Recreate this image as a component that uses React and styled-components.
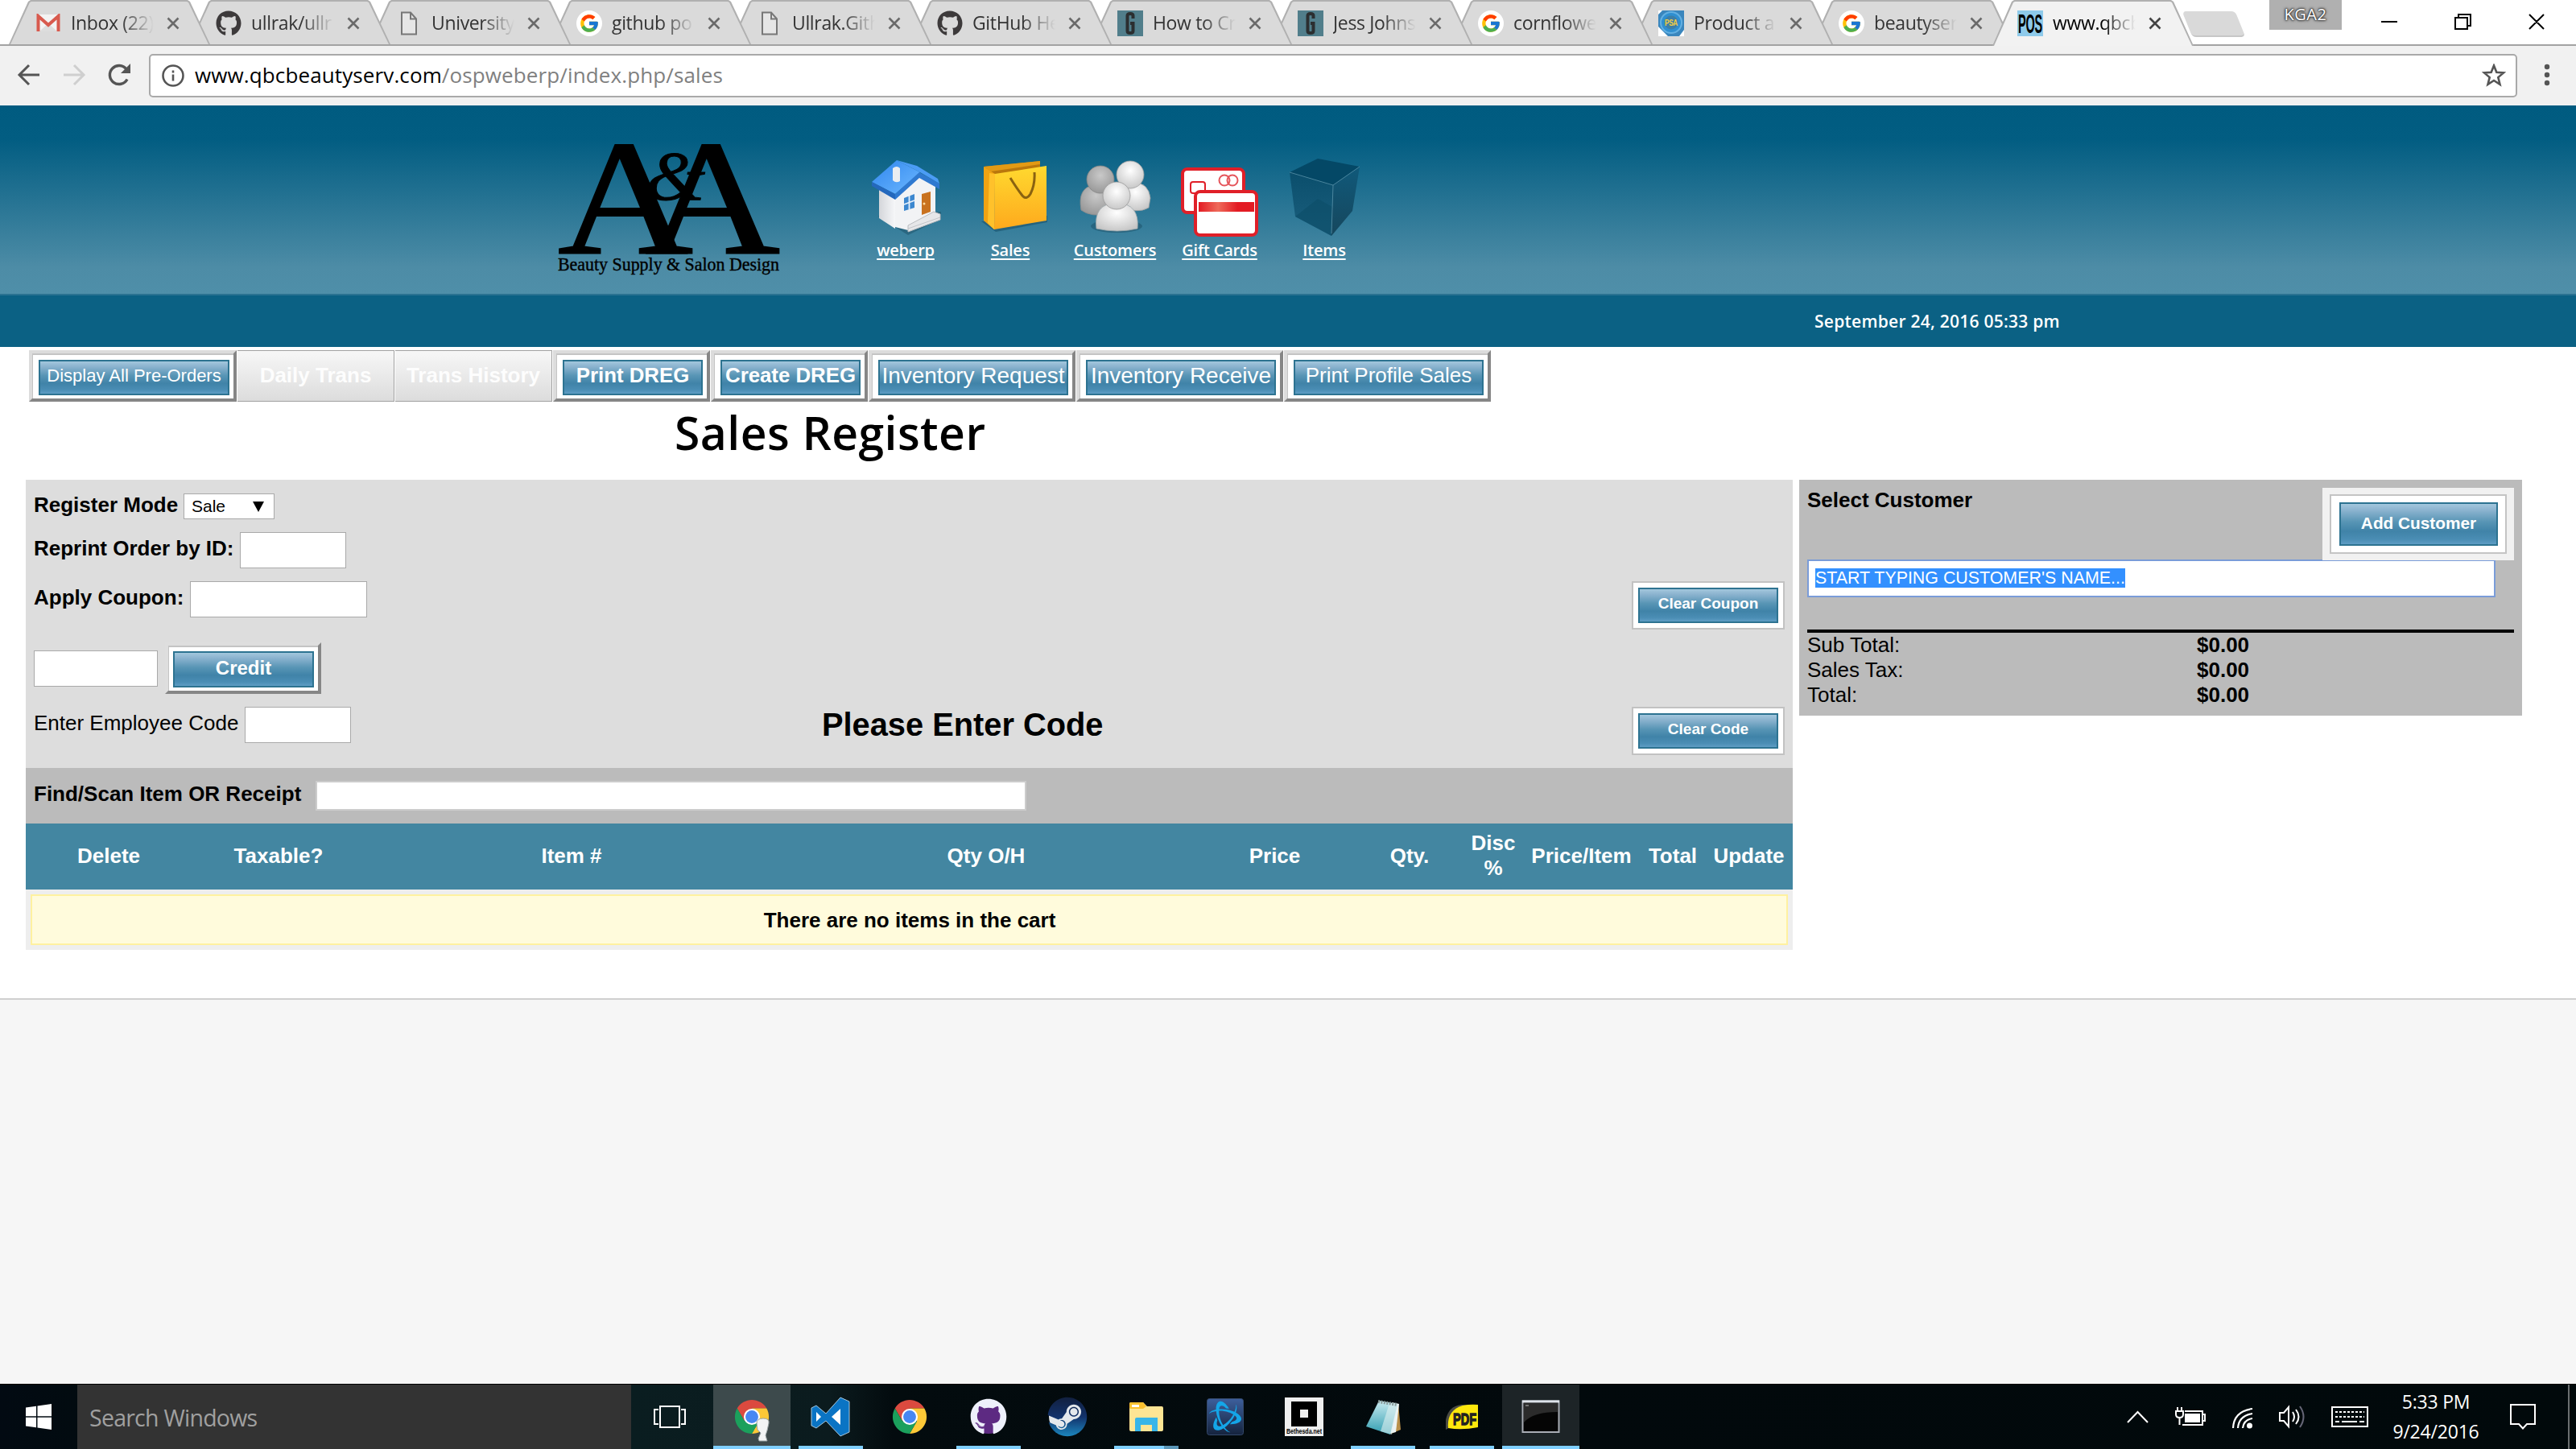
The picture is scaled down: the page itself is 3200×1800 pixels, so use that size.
import React from "react";
import styled, { createGlobalStyle, css } from "styled-components";
import { FaGithub, FaSteam } from "react-icons/fa";
import { FcGoogle } from "react-icons/fc";
import { SiBattledotnet } from "react-icons/si";

const ui = `"Open Sans", "Noto Sans", sans-serif`;
const arial = `"Liberation Sans", Arial, sans-serif`;

const GlobalStyle = createGlobalStyle`
  * { box-sizing: border-box; }
  body { margin: 0; background: #f6f6f6; font-family: ${arial}; font-size: 26px; color: #000; }
  svg { display: block; flex: none; }
  button, input { font-family: inherit; margin: 0; }
`;

const Screen = styled.div`
  width: 3200px;
  height: 1800px;
  display: flex;
  flex-direction: column;
  overflow: hidden;
`;

/* ---------- browser chrome ---------- */

const TabStrip = styled.div`
  height: 57px;
  flex: none;
  display: flex;
  padding-left: 11px;
  background: #fff;
  border-bottom: 2px solid #a3a3a3;
`;

const Tab = styled.div`
  position: relative;
  z-index: ${(p) => (p.$active ? 30 : 20 - p.$order)};
  width: 250px;
  height: ${(p) => (p.$active ? 57 : 55)}px;
  margin-right: -26px;
  flex: none;
  padding: ${(p) => (p.$active ? "0 32px 2px 31px" : "0 32px 0 33px")};
  display: flex;
  align-items: center;
  font-family: ${ui};
  font-size: 23px;
  letter-spacing: -0.35px;
  color: ${(p) => (p.$active ? "#000" : "#333")};

  &::before, &::after {
    content: "";
    position: absolute;
    inset: 0;
    z-index: -1;
    clip-path: polygon(0 100%, 24px 2px, 27px 0, 222px 0, 225px 2px, 250px 100%);
    background: #b0b0b0;
  }
  &::after {
    clip-path: polygon(2px 100%, 26px 3px, 28px 2px, 221px 2px, 223px 3px, 248px 100%);
    background: ${(p) => (p.$active ? "#f2f2f2" : "#dadada")};
  }
`;

const Favicon = styled.span`
  width: 32px;
  height: 32px;
  margin-top: 2px;
  flex: none;
  display: flex;
  align-items: center;
  justify-content: center;
  color: #3d3a3b;
`;

const TabTitle = styled.span`
  width: 103px;
  flex: none;
  margin: 0 0 0 12px;
  line-height: 32px;
  overflow: hidden;
  white-space: nowrap;
  mask-image: linear-gradient(90deg, #000 60%, transparent 100%);
`;

const TabClose = styled.span`
  margin-left: 16px;
  margin-top: 3px;
`;

const NewTab = styled.div`
  width: 66px;
  height: 32px;
  margin: 14px 0 0 18px;
  background: #d9d9d9;
  border-bottom: 2px solid #c6c6c6;
  border-radius: 5px;
  transform: skewX(22deg);
`;

const WindowControls = styled.div`
  margin-left: auto;
  height: 55px;
  display: flex;
  align-items: flex-start;
  padding-right: 39px;
`;

const UserBadge = styled.div`
  width: 90px;
  height: 37px;
  margin-right: 49px;
  background: #b0b0b0;
  font: 400 20px/35px ${ui};
  letter-spacing: 0.5px;
  color: #fff;
  text-align: center;
  text-shadow: 0 0 1px #333, 0 0 2px #333, 0 0 3px #444, 0 0 3px #555, 0 0 4px #666;
`;

const Controls = styled.svg`
  margin-top: 10px;
`;

const Toolbar = styled.div`
  height: 74px;
  flex: none;
  display: flex;
  align-items: center;
  padding: 0 28px 0 20px;
  background: #f1f1f1;
`;

const NavButtons = styled.div`
  display: flex;
  gap: 24px;
  width: 165px;
`;

const AddressBar = styled.div`
  flex: 1;
  height: 54px;
  margin-right: 29px;
  padding: 0 12px 0 14px;
  display: flex;
  align-items: center;
  background: #fff;
  border: 2px solid #a9a9a9;
  border-radius: 5px;
`;

const Url = styled.span`
  margin: -2px auto 0 13px;
  font: 400 26px/40px ${ui};
  letter-spacing: 0.12px;
  color: #808080;
`;

const Host = styled.span`
  color: #000;
`;

/* ---------- site header ---------- */

const SiteHeader = styled.header`
  height: 234px;
  flex: none;
  display: flex;
  padding-left: 690px;
  background: linear-gradient(#005b80 0%, #025d82 18%, #4d8ca6 86%, #4f8fa9 100%);
`;

const Logo = styled.svg`
  margin-top: 44px;
`;

const MainNav = styled.nav`
  display: flex;
  margin: 64px 0 0 80px;
`;

const NavItem = styled.a`
  width: 130px;
  display: flex;
  flex-direction: column;
  align-items: center;
  gap: 2px;
  font: 600 20px/28px ${ui};
  letter-spacing: -0.2px;
  color: #fff;
  text-decoration: underline;
  text-decoration-thickness: 2px;
  text-underline-offset: 3px;
  text-decoration-skip-ink: none;
`;

const DateBar = styled.div`
  height: 66px;
  flex: none;
  padding: 1px 0 0 2254px;
  border-top: 2px solid #2a7291;
  background: #0b6184;
  font: 600 21px/62px ${ui};
  letter-spacing: 0.26px;
  color: #fff;
`;

/* ---------- page ---------- */

const Page = styled.main`
  height: 811px;
  flex: none;
  background: #fff;
  border-bottom: 2px solid #cfcfcf;
`;

const ActionRow = styled.div`
  display: flex;
  gap: 1px;
  padding: 4px 0 0 36px;
`;

const glossy = css`
  background: linear-gradient(#a3c7dd 0%, #8bb3cf 16%, #5895b5 44%, #4083a8 68%, #4a8db4 88%, #5f9dc4 100%);
  border: 2px solid #2d7391;
`;

const BevelButton = styled.button`
  width: ${(p) => p.$w}px;
  height: 64px;
  padding: 8px 5px 4px 8px;
  border: 4px solid;
  border-color: #dcdcdc #868686 #868686 #dcdcdc;
  background: #fff;
  box-shadow: inset 1px 2px 0 #c4c4c4;
  color: #fff;
  display: flex;
`;

const ButtonFace = styled.span`
  ${glossy}
  flex: 1;
  height: ${(p) => p.$h}px;
  padding-bottom: ${(p) => p.$lift || 0}px;
  display: flex;
  align-items: center;
  justify-content: center;
  white-space: nowrap;
  font-size: ${(p) => p.$size}px;
  font-weight: ${(p) => (p.$bold ? 700 : 400)};
`;

const DisabledButton = styled.button`
  width: 195px;
  height: 64px;
  padding: 0 0 2px;
  border: 1px solid #a2a2a2;
  border-width: 1px 1px 1px 0;
  background: linear-gradient(#f7f7f7, #dcdcdc);
  color: #fdfdfd;
  font-size: 26px;
  font-weight: 700;
  white-space: nowrap;
`;

const Title = styled.h1`
  height: 97px;
  margin: 0;
  padding-left: 838px;
  font: 600 57px/76px ${ui};
  letter-spacing: 0.45px;
`;

const Columns = styled.div`
  display: flex;
  align-items: flex-start;
  gap: 8px;
  padding-left: 32px;
`;

const Register = styled.section`
  width: 2195px;
`;

const FormPanel = styled.div`
  height: 358px;
  padding: 17px 10px 0;
  display: flex;
  flex-direction: column;
  gap: 16px;
  background: #ddd;
`;

const FormRow = styled.div`
  height: ${(p) => p.$h}px;
  display: flex;
  align-items: flex-start;
`;

const Label = styled.label`
  width: ${(p) => p.$w}px;
  line-height: ${(p) => p.$lh || 40}px;
  font-weight: ${(p) => (p.$plain ? 400 : 700)};
  white-space: nowrap;
`;

const Field = styled.input`
  width: ${(p) => p.$w}px;
  height: 45px;
  padding: 0;
  border: 1px solid #a9a9a9;
  background: #fff;
`;

const ModeSelect = styled.div`
  width: 113px;
  height: 32px;
  padding: 0 12px 0 9px;
  display: flex;
  align-items: center;
  justify-content: space-between;
  border: 1px solid #a9a9a9;
  background: #fff;
  font-size: 21px;
`;

const CreditRow = styled(FormRow)`
  gap: 9px;
  ${Field} { margin-top: 10px; }
`;

const CreditButton = styled(BevelButton)`
  border-top-color: #dedede;
  border-left-color: #dedede;
  padding: 7px 5px 4px 6px;
`;

const Prompt = styled.strong`
  margin: 0 auto 0 585px;
  font-size: 39.8px;
  line-height: 45px;
`;

const FramedButton = styled.button`
  width: 190px;
  height: 60px;
  margin-left: auto;
  padding: 6px;
  border: 2px solid #c2c2c2;
  background: #fff;
  color: #fff;
  display: flex;
`;

const ScanRow = styled.div`
  height: 69px;
  padding: 0 10px;
  display: flex;
  align-items: center;
  background: #bbb;
  ${Label} { margin-top: -5px; }
`;

const ScanField = styled.input`
  width: 883px;
  height: 37px;
  padding: 0;
  border: 2px solid #ccc;
  background: #fff;
`;

const CartHead = styled.div`
  height: 82px;
  display: grid;
  grid-template-columns: 206px 216px 512px 518px 199px 136px 72px 147px 80px 109px;
  align-items: center;
  background: #4386a1;
  color: #fff;
  font-weight: 700;
  line-height: 31px;
  text-align: center;
  padding-bottom: 2px;
`;

const CartBody = styled.div`
  height: 75px;
  padding: 6px;
  background: #eee;
`;

const EmptyNotice = styled.div`
  height: 63px;
  border: 2px solid #fff1a0;
  background: #fffbdc;
  font-weight: 700;
  line-height: 60px;
  text-align: center;
  padding-left: 1px;
`;

const CustomerPanel = styled.aside`
  width: 898px;
  height: 293px;
  padding: 10px 10px 0;
  background: #bbb;
`;

const CustomerHead = styled.div`
  height: 89px;
  display: flex;
  justify-content: space-between;
  align-items: flex-start;
  font-weight: 700;
  line-height: 30px;
`;

const AddCustomer = styled.button`
  position: relative;
  width: 238px;
  height: 90px;
  padding: 8px 9px;
  border: 0;
  background: #f1f1f1;
  color: #fff;
  display: flex;
`;

const AddFrame = styled.span`
  flex: 1;
  height: 74px;
  padding: 8px 9px 8px 10px;
  border: 2px solid #c4c4c4;
  background: #fff;
  display: flex;
`;

const CustomerField = styled.div`
  width: 855px;
  height: 47px;
  padding: 9px 8px;
  border: 2px solid #7a9cd8;
  background: #fff;
`;

const SelectedText = styled.span`
  display: inline-block;
  background: #3390ff;
  color: #fff;
  font-size: 21.4px;
  line-height: 24px;
  vertical-align: top;
  white-space: nowrap;
`;

const Totals = styled.dl`
  margin: 40px 0 0;
  border-top: 4px solid #000;
  display: grid;
  grid-template-columns: 484px 1fr;
  line-height: 31px;
`;

const Term = styled.dt``;

const Amount = styled.dd`
  margin: 0;
  font-weight: 700;
`;

const Blank = styled.div`
  flex: 1;
  background: #f6f6f6;
`;

/* ---------- taskbar ---------- */

const Taskbar = styled.footer`
  height: 81px;
  flex: none;
  display: flex;
  border-top: 1px solid #000;
  background: linear-gradient(90deg, #020a12 0, #020b10 96px, #0a1d20 784px, #0b1b1e 1030px, #030b0e 1110px, #02090c 60%, #01090b 100%);
  color: #fff;
`;

const StartButton = styled.div`
  width: 96px;
  display: flex;
  align-items: center;
  justify-content: center;
`;

const SearchBox = styled.div`
  width: 688px;
  padding-left: 15px;
  background: #333;
  color: #a0a0a0;
  font: 400 28.5px/82px ${ui};
  letter-spacing: -0.75px;
`;

const TaskView = styled.div`
  width: 96px;
  padding-bottom: 1px;
  display: flex;
  align-items: center;
  justify-content: center;
`;

const Apps = styled.div`
  display: flex;
  gap: 2px;
  margin-left: 6px;
`;

const AppButton = styled.div`
  position: relative;
  width: 96px;
  display: flex;
  align-items: center;
  justify-content: center;
  background: ${(p) => p.$bg || "transparent"};
  &::after {
    content: "";
    position: absolute;
    bottom: 0;
    left: ${(p) => (p.$wide ? 0 : 8)}px;
    right: ${(p) => (p.$wide ? 0 : 8)}px;
    height: 4px;
    background: ${(p) => (p.$stack ? "linear-gradient(90deg,#7fcfff 62px,#5b96b8 62px)" : "#7fcfff")};
    display: ${(p) => (p.$open ? "block" : "none")};
  }
`;

const OverflowSvg = styled.svg`
  overflow: visible;
`;

const Tray = styled.div`
  margin-left: auto;
  display: flex;
  align-items: center;
`;

const Clock = styled.div`
  width: 130px;
  margin: 0 27px 0 19px;
  font: 400 23px/37px ${ui};
  letter-spacing: -0.2px;
  text-align: center;
`;

const ShowDesktop = styled.div`
  width: 10px;
  height: 80px;
  margin-left: 40px;
  border-left: 2px solid #6b6f70;
`;

/* ---------- drawings ---------- */

const PageIcon = () => (
  <svg width="22" height="30" viewBox="0 0 22 30" fill="#e6e6e6" stroke="#777" strokeWidth="2">
    <path d="M2 1.500h11l7 8v19H2z" /><path d="M13 1.500v8h7" fill="none" />
  </svg>
);
const Gmail = () => (
  <svg width="30" height="24" viewBox="0 0 30 24">
    <path d="M2 1h26v21H2z" fill="#f3f3f3" />
    <path d="M4 22L15 12l11 10z" fill="#ddd" />
    <path d="M2.500 22V3L15 14 27.500 3v19" fill="none" stroke="#d85a4e" strokeWidth="4" />
  </svg>
);
const Google = () => (
  <svg width="32" height="32" viewBox="0 0 32 32">
    <circle cx="16" cy="16" r="16" fill="#fff" />
    <FcGoogle x="3" y="3" size={26} />
  </svg>
);
const GBox = () => (
  <svg width="32" height="32" viewBox="0 0 32 32">
    <path d="M0 0h32v32H0z" fill="#517e8b" />
    <path d="M19.500 10V6.500q0-2.500-3.500-2.500t-3.500 2.500v19q0 2.500 3.500 2.500t3.500-2.500V16H16" fill="none" stroke="#2b2e30" strokeWidth="4" />
  </svg>
);
const Badge = () => (
  <svg width="32" height="32" viewBox="0 0 32 32">
    <path d="M0 0h32v32H0z" fill="#3a86bd" /><path d="M0 20l12 12H0zM0 0h5L0 5zM32 24v8h-6z" fill="#fff" />
    <circle cx="16" cy="15" r="13" fill="#2f8fd0" stroke="#63b0e2" strokeWidth="2" />
    <circle cx="16" cy="15" r="8.500" fill="#3d7ea6" />
    <text x="8" y="19" fontFamily="Liberation Sans" fontWeight="700" fontSize="11" fill="#f2cf45" textLength="16" lengthAdjust="spacingAndGlyphs">PSA</text>
  </svg>
);
const Pos = () => (
  <svg width="32" height="32" viewBox="0 0 32 32">
    <path d="M0 0h32v32H0z" fill="#8ecaea" />
    <text x="1" y="27.500" fontFamily="Liberation Sans" fontWeight="700" fontSize="33" textLength="30" lengthAdjust="spacingAndGlyphs">POS</text>
  </svg>
);
const icons = { gmail: Gmail, page: PageIcon, google: Google, gbox: GBox, badge: Badge, pos: Pos, github: () => <FaGithub size={32} /> };

const Cross = ({ color }) => (
  <svg width="16" height="16" viewBox="0 0 16 16" stroke={color} strokeWidth="2.600"><path d="M1.500 1.500l13 13M14.500 1.500l-13 13" /></svg>
);

const House = () => (
  <svg width="100" height="100" viewBox="0 0 100 100">
    <defs>
      <linearGradient id="roof" x1="0" y1="0" x2="1" y2="1"><stop offset="0" stopColor="#2f86ee" /><stop offset="1" stopColor="#6db8ff" /></linearGradient>
      <linearGradient id="wall" x1="0" y1="0" x2="1" y2="0"><stop offset="0" stopColor="#d4d6da" /><stop offset="1" stopColor="#f6f7f9" /></linearGradient>
    </defs>
    <path d="M16 74L53 97 94 77V68H20z" fill="#123c50" opacity=".35" />
    <path d="M17 38l20 10v41L17 76z" fill="url(#wall)" />
    <path d="M37 48l29-29 21 16v36L53 91 37 87z" fill="#f2f3f5" />
    <path d="M53 85l32-17 8 3v7L53 93z" fill="#e6e7e9" stroke="#b9bcc0" />
    <path d="M53 89l40-14" stroke="#c3c5c9" />
    <path d="M8 31L39 4l29 15-31 27z" fill="url(#roof)" />
    <path d="M8 31l29 15v7L8 36z" fill="#2468bd" />
    <path d="M37 46l30-27 25 14v7L67 26 37 53z" fill="#2f79d0" />
    <path d="M39 4L68 19l24 14-2-6L64 11z" fill="#4b9cf5" />
    <path d="M34 14q5-4 9 0v16q-5 3-9-1z" fill="#e9edf1" />
    <path d="M48 51l13-5v17l-13 4z" fill="#3c87cf" /><path d="M54.500 48v17M48 59l13-5" stroke="#e6f0fa" strokeWidth="1.800" />
    <path d="M70 46l11-3v25l-11 4z" fill="#c9721f" /><circle cx="73" cy="58" r="1.500" fill="#ffdca0" />
  </svg>
);
const Bag = () => (
  <svg width="100" height="100" viewBox="0 0 100 100">
    <defs><linearGradient id="bag" x1="0" y1="0" x2="0" y2="1"><stop offset="0" stopColor="#ffd92f" /><stop offset="1" stopColor="#fea91d" /></linearGradient></defs>
    <path d="M14 80l18 13 64-12v-8z" fill="#0c3c52" opacity=".4" />
    <path d="M17 12L87 5v8l-56 9z" fill="#b9770c" /><path d="M17 12L87 5v4L26 18z" fill="#e29a14" />
    <path d="M17 12l14 9-1 69-13-11z" fill="#f0a313" /><path d="M24 20l7 1-1 69-8-8z" fill="#ffc12b" />
    <path d="M31 21l64-10v68l-65 11z" fill="url(#bag)" />
    <path d="M50 26q8 13 15 22 5 6 10-2 6-12 5-27" fill="none" stroke="#8a6210" strokeWidth="3" />
  </svg>
);
const People = () => (
  <svg width="100" height="100" viewBox="0 0 100 100">
    <defs>
      <radialGradient id="pa" cx=".5" cy=".35" r=".65"><stop offset="0" stopColor="#c9c9c9" /><stop offset="1" stopColor="#989898" /></radialGradient>
      <radialGradient id="pb" cx=".5" cy=".35" r=".7"><stop offset="0" stopColor="#fff" /><stop offset="1" stopColor="#c4c4c4" /></radialGradient>
    </defs>
    <ellipse cx="52" cy="86" rx="32" ry="8" fill="#123c50" opacity=".35" />
    <path d="M8 66q-5-28 16-31 22 0 22 20l-4 16q-22 4-34-5z" fill="url(#pa)" stroke="#8c8c8c" strokeWidth=".800" /><ellipse cx="32" cy="28" rx="17" ry="17" fill="url(#pa)" stroke="#858585" strokeWidth=".800" />
    <path d="M58 60q-4-26 14-29 20 1 22 20l-2 12q-16 9-34-3z" fill="url(#pb)" stroke="#a0a0a0" strokeWidth=".800" /><ellipse cx="69" cy="22" rx="17" ry="17" fill="url(#pb)" stroke="#a0a0a0" strokeWidth=".800" />
    <path d="M27 89q-4-31 25-32 29 1 26 32-25 6-51 0z" fill="url(#pb)" stroke="#9fa9ad" strokeWidth=".800" /><ellipse cx="52" cy="48" rx="17" ry="17" fill="url(#pb)" stroke="#999" strokeWidth=".800" />
  </svg>
);
const Cards = () => (
  <svg width="100" height="100" viewBox="0 0 100 100">
    <defs><linearGradient id="strip"><stop offset="0" stopColor="#e31b23" /><stop offset=".35" stopColor="#ee6a5a" /><stop offset=".7" stopColor="#e31b23" /></linearGradient></defs>
    <rect x="4" y="15" width="76" height="54" rx="6" fill="#fff" stroke="#e01f28" strokeWidth="4" />
    <rect x="14" y="31" width="18" height="14" rx="3" fill="#fff" stroke="#e01f28" strokeWidth="2" />
    <circle cx="56" cy="29" r="6.500" fill="none" stroke="#e5555b" strokeWidth="2" /><circle cx="66" cy="29" r="6.500" fill="none" stroke="#e5555b" strokeWidth="2" />
    <rect x="20" y="43" width="76" height="54" rx="6" fill="#fff" stroke="#e01f28" strokeWidth="4" />
    <path d="M24 56h69v12H24z" fill="url(#strip)" />
  </svg>
);
const Cube = () => (
  <svg width="100" height="100" viewBox="0 0 100 100">
    <defs><linearGradient id="cl" x1="0" y1="0" x2="0" y2="1"><stop offset="0" stopColor="#0a4e6c" /><stop offset="1" stopColor="#1c607e" /></linearGradient>
      <linearGradient id="cr" x1="0" y1="0" x2="0" y2="1"><stop offset="0" stopColor="#10597a" /><stop offset="1" stopColor="#16475d" /></linearGradient></defs>
    <path d="M7 19L42 2l52 10-33 23z" fill="#044866" />
    <path d="M7 19l54 16-2 63-45-24z" fill="url(#cl)" />
    <path d="M61 35l33-23-9 55-26 31z" fill="url(#cr)" />
    <path d="M14 74l28-22 18 10-1 36z" fill="#0c4c67" opacity=".6" />
    <path d="M7 19l54 16 33-23M61 35l-2 60" fill="none" stroke="#6fa3b8" strokeWidth="1" opacity=".6" />
  </svg>
);

const Chrome = () => (
  <svg width="46" height="46" viewBox="0 0 48 48">
    <path d="M24 13h19.050A22 22 0 0 0 4.950 13L14.500 29.500z" fill="#db4a3f" />
    <path d="M33.500 29.500L24 46A22 22 0 0 0 43.050 13H24z" fill="#fdc837" />
    <path d="M14.500 29.500L4.950 13A22 22 0 0 0 24 46l9.500-16.500z" fill="#1ba05c" />
    <circle cx="24" cy="24" r="10.500" fill="#fff" /><circle cx="24" cy="24" r="8.300" fill="#4787f3" />
  </svg>
);
const ChromeProfile = () => (
  <OverflowSvg width="46" height="46" viewBox="0 0 46 46">
    <Chrome />
    <path d="M29 31q0-6 8-6t7 6l-2 9-2 6 2 7H32l-1-3 3-7-4-4z" fill="#f2f4f5" stroke="#9aa4a6" />
  </OverflowSvg>
);
const VSCode = () => (
  <svg width="50" height="50" viewBox="0 0 50 50">
    <path d="M1 14l6-3 12 10L37 1l11 5v38L37 49 19 30 7 39l-6-3z" fill="#0a74c4" stroke="#a7c7dc" />
    <path d="M7 19v12l6-6zM37 15L26 25l11 10z" fill="#fff" />
  </svg>
);
const GithubDesktop = () => (
  <svg width="46" height="46" viewBox="0 0 46 46">
    <circle cx="23" cy="23" r="21" fill="#5d2a82" /><FaGithub x="0" y="0" size={46} color="#eef0fb" />
  </svg>
);
const Steam = () => (
  <svg width="50" height="50" viewBox="0 0 50 50">
    <defs><linearGradient id="st" x1="0" y1="0" x2="0" y2="1"><stop offset="0" stopColor="#12203f" /><stop offset=".5" stopColor="#12326b" /><stop offset="1" stopColor="#1c86bd" /></linearGradient></defs>
    <circle cx="25" cy="25" r="23" fill="#e4e8ec" /><FaSteam x="0" y="0" size={50} fill="url(#st)" color="url(#st)" />
  </svg>
);
const Folder = () => (
  <svg width="46" height="38" viewBox="0 0 46 38">
    <path d="M2 3q0-2 2-2h15l5 5h18q2 0 2 2v27q0 2-2 2H4q-2 0-2-2z" fill="#fee594" /><path d="M2 8V3q0-2 2-2h15l4 5-4 3H4q-2 0-2-1z" fill="#fcc12f" /><path d="M5 4h9v3H5z" fill="#fff" />
    <path d="M9 37V22q0-2 2-2h26v17h-7v-8H16v8z" fill="#38b5e8" />
  </svg>
);
const Battle = () => (
  <svg width="46" height="46" viewBox="0 0 46 46">
    <defs><linearGradient id="bn" x1="0" y1="0" x2="0" y2="1"><stop offset="0" stopColor="#3d5f9c" /><stop offset="1" stopColor="#15233d" /></linearGradient></defs>
    <rect x=".500" y=".500" width="45" height="45" rx="3" fill="url(#bn)" stroke="#34496b" /><SiBattledotnet x="3" y="3" size={40} color="#14a6e8" />
  </svg>
);
const Bethesda = () => (
  <svg width="48" height="48" viewBox="0 0 48 48">
    <path d="M0 0h48v48H0z" fill="#efefef" /><path d="M8 5h32v31H8z" fill="#000" /><path d="M19 15h10v10H19z" fill="#efefef" />
    <text x="2" y="45" fontFamily="Liberation Sans" fontWeight="700" fontSize="9" textLength="44" lengthAdjust="spacingAndGlyphs">Bethesda.net</text>
  </svg>
);
const Notepad = () => (
  <svg width="46" height="46" viewBox="0 0 46 46">
    <defs><linearGradient id="np" x1="0" y1="0" x2="0" y2="1"><stop offset="0" stopColor="#c8eaf0" /><stop offset="1" stopColor="#2f9db0" /></linearGradient></defs>
    <path d="M42 6l3 33-12 5z" fill="#b9904a" /><path d="M34 5l9 2-4 35-8 2z" fill="#ecf3f3" />
    <path d="M18 3l23 4-9 38L2 35z" fill="url(#np)" /><path d="M31 6l10 1-7 38-14-4z" fill="#dff0f0" opacity=".6" />
    <path d="M17 4l24 4" stroke="#899" strokeWidth="4" strokeDasharray="2 1.500" />
  </svg>
);
const Pdf = () => (
  <svg width="42" height="32" viewBox="0 0 42 32">
    <path d="M1 32V20Q4 3 20 1L41 1v9L8 28z" fill="#4b4b44" /><path d="M4 30Q2 8 22 2q10-2 19-1v28q-20 4-37 1z" fill="#ffe80c" />
    <text x="10" y="26" fontFamily="Liberation Sans" fontWeight="700" fontSize="21" fill="#222" textLength="29" lengthAdjust="spacingAndGlyphs" stroke="#222" strokeWidth="1.400">PDF</text>
  </svg>
);
const Cmd = () => (
  <svg width="48" height="42" viewBox="0 0 48 42">
    <path d="M1.500 1.500h45v38.500h-45z" fill="#050505" stroke="#a9adb5" strokeWidth="2" /><path d="M1 2h46" stroke="#dfe3ea" strokeWidth="3" />
    <path d="M3 28Q14 15 45 15V4H3z" fill="#2b2b2b" /><path d="M5 7h4" stroke="#bbb" />
  </svg>
);

const tabs = [
  ["gmail", "Inbox (22)"], ["github", "ullrak/ullr"], ["page", "University"], ["google", "github po"],
  ["page", "Ullrak.Gith"], ["github", "GitHub He"], ["gbox", "How to Cr"], ["gbox", "Jess Johns"],
  ["google", "cornflowe"], ["badge", "Product a"], ["google", "beautyser"], ["pos", "www.qbcb"],
];

const nav = [["weberp", House], ["Sales", Bag], ["Customers", People], ["Gift Cards", Cards], ["Items", Cube]];

const actions = [
  { text: "Display All Pre-Orders", w: 258, size: 22 },
  { text: "Daily Trans", disabled: true },
  { text: "Trans History", disabled: true },
  { text: "Print DREG", w: 195, size: 25.8, bold: true },
  { text: "Create DREG", w: 195, size: 25.8, bold: true },
  { text: "Inventory Request", w: 257, size: 28 },
  { text: "Inventory Receive", w: 257, size: 28 },
  { text: "Print Profile Sales", w: 257, size: 26 },
];

const cartColumns = ["Delete", "Taxable?", "Item #", "Qty O/H", "Price", "Qty.", "Disc %", "Price/Item", "Total", "Update"];
const totals = [["Sub Total:", "$0.00"], ["Sales Tax:", "$0.00"], ["Total:", "$0.00"]];

const apps = [
  { Icon: ChromeProfile, bg: "#3d4a4c", open: true, wide: true },
  { Icon: VSCode, open: true },
  { Icon: Chrome },
  { Icon: GithubDesktop, open: true },
  { Icon: Steam },
  { Icon: Folder, open: true, stack: true },
  { Icon: Battle },
  { Icon: Bethesda },
  { Icon: Notepad, open: true },
  { Icon: Pdf, open: true },
  { Icon: Cmd, bg: "#1d2427", open: true, wide: true },
];

export default function App() {
  return (
    <Screen>
      <GlobalStyle />
      <TabStrip>
        {tabs.map(([icon, title], i) => {
          const Icon = icons[icon];
          const active = i === tabs.length - 1;
          return (
            <Tab key={i} $order={i} $active={active}>
              <Favicon><Icon /></Favicon>
              <TabTitle>{title}</TabTitle>
              <TabClose><Cross color={active ? "#444" : "#6a6a6a"} /></TabClose>
            </Tab>
          );
        })}
        <NewTab />
        <WindowControls>
          <UserBadge>KGA2</UserBadge>
          <Controls width="203" height="34" viewBox="0 0 203 34" fill="none" stroke="#000" strokeWidth="2">
            <path d="M0 17h20M92 12h15v14H92zM96 12V8h15v14h-4M184 8l18 18M202 8l-18 18" />
          </Controls>
        </WindowControls>
      </TabStrip>

      <Toolbar>
        <NavButtons>
          <svg width="32" height="32" viewBox="0 0 32 32" fill="none" stroke="#555" strokeWidth="3"><path d="M29 15H5M16 3L4 15l12 12" /></svg>
          <svg width="32" height="32" viewBox="0 0 32 32" fill="none" stroke="#cfcfcf" strokeWidth="3"><path d="M3 15h24M16 3l12 12-12 12" /></svg>
          <svg width="32" height="32" viewBox="0 0 32 32" fill="none" stroke="#555" strokeWidth="3.400"><path d="M26 20.500A11.500 11.500 0 1 1 25 8" /><path d="M30 1v12H18z" fill="#555" stroke="none" /></svg>
        </NavButtons>
        <AddressBar>
          <svg width="28" height="28" viewBox="0 0 28 28" fill="none" stroke="#555" strokeWidth="2.600"><circle cx="14" cy="14" r="12.500" /><path d="M14 12.500v8M14 7.500v3" /></svg>
          <Url><Host>www.qbcbeautyserv.com</Host>/ospweberp/index.php/sales</Url>
          <svg width="30" height="30" viewBox="0 0 30 30" fill="none" stroke="#555" strokeWidth="2.600"><path d="M15 2.500l3.300 8.300 8.700.600-6.700 5.700 2.200 8.700L15 21l-7.500 4.800 2.200-8.700L3 11.400l8.700-.600z" /></svg>
        </AddressBar>
        <svg width="16" height="32" viewBox="0 0 16 32" fill="#555"><circle cx="8" cy="5" r="3.200" /><circle cx="8" cy="15" r="3.200" /><circle cx="8" cy="25" r="3.200" /></svg>
      </Toolbar>

      <SiteHeader>
        <Logo width="290" height="170" viewBox="0 0 290 170" fontFamily="'Liberation Serif', serif">
          <g fontSize="203" stroke="#000" strokeWidth="2">
            <text x="3" y="139" textLength="168" lengthAdjust="spacingAndGlyphs">A</text>
            <text x="111" y="139" textLength="168" lengthAdjust="spacingAndGlyphs">A</text>
          </g>
          <text x="112" y="73" fontSize="86" fontStyle="italic" stroke="#000" strokeWidth="1" textLength="74" lengthAdjust="spacingAndGlyphs">&amp;</text>
          <text x="3" y="161" fontSize="22.500" stroke="#000" strokeWidth=".400" textLength="275" lengthAdjust="spacingAndGlyphs">Beauty Supply &amp; Salon Design</text>
        </Logo>
        <MainNav>
          {nav.map(([text, Icon]) => <NavItem key={text}><Icon />{text}</NavItem>)}
        </MainNav>
      </SiteHeader>
      <DateBar>September 24, 2016 05:33 pm</DateBar>

      <Page>
        <ActionRow>
          {actions.map((a) => a.disabled
            ? <DisabledButton key={a.text}>{a.text}</DisabledButton>
            : <BevelButton key={a.text} $w={a.w}><ButtonFace $h={44} $size={a.size} $bold={a.bold} $lift={5}>{a.text}</ButtonFace></BevelButton>)}
        </ActionRow>
        <Title>Sales Register</Title>
        <Columns>
          <Register>
            <FormPanel>
              <FormRow $h={32}>
                <Label $w={186} $lh={28}>Register Mode</Label>
                <ModeSelect>Sale<svg width="14" height="13" viewBox="0 0 14 13"><path d="M0 0h14L7 13z" /></svg></ModeSelect>
              </FormRow>
              <FormRow $h={45}><Label $w={256}>Reprint Order by ID:</Label><Field $w={132} /></FormRow>
              <FormRow $h={60}>
                <Label $w={194}>Apply Coupon:</Label><Field $w={220} />
                <FramedButton><ButtonFace $h={44} $size={19} $bold $lift={4}>Clear Coupon</ButtonFace></FramedButton>
              </FormRow>
              <CreditRow $h={64}>
                <Field $w={154} />
                <CreditButton $w={194}><ButtonFace $h={45} $size={24} $bold $lift={4}>Credit</ButtonFace></CreditButton>
              </CreditRow>
              <FormRow $h={60}>
                <Label $w={262} $plain>Enter Employee Code</Label><Field $w={132} />
                <Prompt>Please Enter Code</Prompt>
                <FramedButton><ButtonFace $h={44} $size={19} $bold $lift={4}>Clear Code</ButtonFace></FramedButton>
              </FormRow>
            </FormPanel>
            <ScanRow><Label $w={350}>Find/Scan Item OR Receipt</Label><ScanField /></ScanRow>
            <CartHead>{cartColumns.map((c) => <span key={c}>{c}</span>)}</CartHead>
            <CartBody><EmptyNotice>There are no items in the cart</EmptyNotice></CartBody>
          </Register>
          <CustomerPanel>
            <CustomerHead>
              Select Customer
              <AddCustomer><AddFrame><ButtonFace $h={54} $size={20.8} $bold $lift={2}>Add Customer</ButtonFace></AddFrame></AddCustomer>
            </CustomerHead>
            <CustomerField><SelectedText>START TYPING CUSTOMER'S NAME...</SelectedText></CustomerField>
            <Totals>
              {totals.map(([t, v]) => <React.Fragment key={t}><Term>{t}</Term><Amount>{v}</Amount></React.Fragment>)}
            </Totals>
          </CustomerPanel>
        </Columns>
      </Page>
      <Blank />

      <Taskbar>
        <StartButton>
          <svg width="32" height="32" viewBox="0 0 32 32" fill="#fff"><path d="M0 4.500l13-1.800v12.600H0zM14.500 2.500L32 0v15.300H14.500zM0 16.700h13v12.600L0 27.500zM14.500 16.700H32V32l-17.500-2.500z" /></svg>
        </StartButton>
        <SearchBox>Search Windows</SearchBox>
        <TaskView>
          <svg width="42" height="30" viewBox="0 0 42 30" fill="none" stroke="#fff" strokeWidth="2"><path d="M9 2h24v26H9zM7 6H2v18h5M35 6h5v18h-5" /></svg>
        </TaskView>
        <Apps>
          {apps.map(({ Icon, bg, open, wide, stack }, i) => <AppButton key={i} $bg={bg} $open={open} $wide={wide} $stack={stack}><Icon /></AppButton>)}
        </Apps>
        <Tray>
          <svg width="304" height="80" viewBox="0 0 304 80" fill="none" stroke="#fff" strokeWidth="2">
            <path d="M5 47l12.500-13L30 47" />
            <path d="M76 33h22v17H73M98 37h3v8h-3" /><path d="M76 36h19v11H76z" fill="#fff" stroke="none" />
            <path d="M67 28v5M72 28v5M65 33h9v4q0 4-4.500 4T65 37zM69.500 41v9" />
            <path d="M136 54q1-21 24-24M142 54q1-15 18-18M148 54q1-10 12-12" strokeWidth="2.200" /><circle cx="156.500" cy="51" r="3.500" fill="#fff" stroke="none" />
            <path d="M194 35h5l6-7v24l-6-7h-5zM210 34q4 6 0 12M214 31q7 9 0 18" /><path d="M219 27q9 13 0 26" stroke="#667" />
            <rect x="259" y="28" width="44" height="24" /><path d="M263 34h36M263 40h36" strokeDasharray="3 2" /><path d="M263 46h5M271 46h19M293 46h6" />
          </svg>
          <Clock>5:33 PM<br />9/24/2016</Clock>
          <svg width="32" height="32" viewBox="0 0 32 32" fill="none" stroke="#fff" strokeWidth="2"><path d="M1 1h30v24H21l-5 5.500-5-5.500H1z" /></svg>
          <ShowDesktop />
        </Tray>
      </Taskbar>
    </Screen>
  );
}
